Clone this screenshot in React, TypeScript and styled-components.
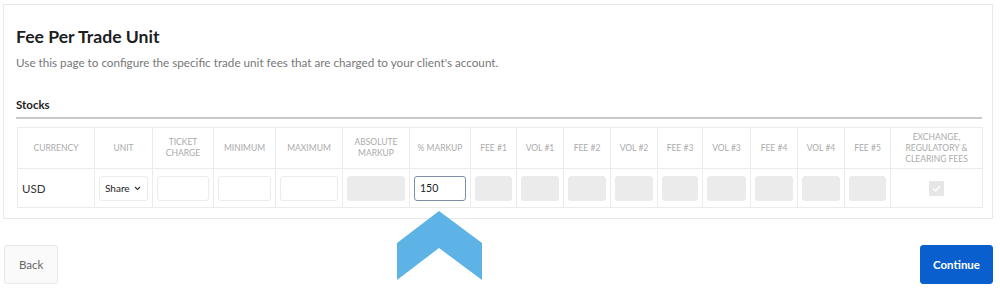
import React from "react";
import styled, { createGlobalStyle } from "styled-components";

const GlobalStyle = createGlobalStyle`
	body {
		margin: 0;
		background: #fff;
		font-family: "Lato", "Open Sans", Arial, sans-serif;
		color: #222;
	}
`;

const Page = styled.div`
	position: relative;
	width: 1000px;
	height: 289px;
	padding-top: 4px;
	box-sizing: border-box;
`;

const Card = styled.div`
	margin: 0 7px 0 3px;
	height: 215px;
	box-sizing: border-box;
	border: 1px solid #e8e8e8;
	padding: 22px 10px 0 12px;
`;

const Title = styled.h1`
	margin: 0;
	font-size: 17.6px;
	font-weight: 700;
	color: #1e1e1e;
	line-height: 20px;
`;

const Subtitle = styled.p`
	margin: 8px 0 0;
	font-size: 11.7px;
	color: #777;
	line-height: 14px;
`;

const SectionTitle = styled.h2`
	margin: 29px 0 0;
	font-size: 11.5px;
	font-weight: 700;
	color: #222;
	line-height: 14px;
	padding-bottom: 5px;
	border-bottom: 2px solid #c9c9c9;
`;

const Table = styled.table`
	margin: 8px 0 0 1px;
	width: 965px;
	border-collapse: collapse;
	table-layout: fixed;
`;

const HeadCell = styled.th`
	height: 40px;
	border: 1px solid #ebebeb;
	padding: 0 3px;
	font-size: 8.5px;
	font-weight: 400;
	line-height: 11px;
	color: #ababab;
	text-transform: uppercase;
	text-align: center;
	vertical-align: middle;
`;

const BodyCell = styled.td<{ $left?: boolean }>`
	height: 38px;
	border: 1px solid #ebebeb;
	padding: 0 4px;
	font-size: 11.5px;
	color: #333;
	text-align: ${(p) => (p.$left ? "left" : "center")};
	vertical-align: middle;
`;

const Field = styled.div<{ $disabled?: boolean; $active?: boolean }>`
	height: 25px;
	box-sizing: border-box;
	border-radius: 3px;
	border: 1px solid ${(p) => (p.$active ? "#7e8fa3" : p.$disabled ? "#ebebeb" : "#ececec")};
	background: ${(p) => (p.$disabled ? "#ebebeb" : "#fff")};
	font-size: 10.5px;
	color: #222;
	display: flex;
	align-items: center;
	padding-left: 5px;
	text-align: left;
`;

const Select = styled(Field)`
	justify-content: space-between;
	padding: 0 6px 0 5px;
	font-size: 10px;
`;

const Check = styled.span`
	display: inline-flex;
	align-items: center;
	justify-content: center;
	width: 15px;
	height: 15px;
	background: #e6e6e6;
	border-radius: 1px;
`;

const Footer = styled.div`
	display: flex;
	justify-content: space-between;
	padding: 26px 7px 0 4px;
`;

const Button = styled.button<{ $primary?: boolean }>`
	height: 39px;
	padding: 0 ${(p) => (p.$primary ? 12 : 14)}px;
	border-radius: 3px;
	font-family: inherit;
	font-size: 11.5px;
	font-weight: ${(p) => (p.$primary ? 700 : 400)};
	border: 1px solid ${(p) => (p.$primary ? "#0a5fcf" : "#e8e8e8")};
	background: ${(p) => (p.$primary ? "#0a5fcf" : "#fafafa")};
	color: ${(p) => (p.$primary ? "#fff" : "#666")};
`;

const Pointer = styled.svg`
	position: absolute;
	left: 397px;
	top: 211px;
`;

const columns: [string, number][] = [
	["Currency", 77],
	["Unit", 58],
	["Ticket Charge", 61],
	["Minimum", 62],
	["Maximum", 67],
	["Absolute Markup", 67],
	["% Markup", 61],
	["Fee #1", 46],
	["Vol #1", 47],
	["Fee #2", 47],
	["Vol #2", 47],
	["Fee #3", 45],
	["Vol #3", 48],
	["Fee #4", 47],
	["Vol #4", 47],
	["Fee #5", 46],
	["Exchange, Regulatory & Clearing Fees", 92],
];

const App = () => {
	return (
		<>
			<GlobalStyle />
			<Page>
				<Card>
					<Title>Fee Per Trade Unit</Title>
					<Subtitle>Use this page to configure the specific trade unit fees that are charged to your client's account.</Subtitle>
					<SectionTitle>Stocks</SectionTitle>
					<Table>
						<colgroup>
							{columns.map(([name, w]) => (
								<col key={name} style={{ width: w }} />
							))}
						</colgroup>
						<thead>
							<tr>
								{columns.map(([name]) => (
									<HeadCell key={name}>{name}</HeadCell>
								))}
							</tr>
						</thead>
						<tbody>
							<tr>
								<BodyCell $left>USD</BodyCell>
								<BodyCell>
									<Select>
										Share
										<svg width="7" height="5" viewBox="0 0 7 5">
											<path d="M1 1 L3.5 3.5 L6 1" fill="none" stroke="#333" strokeWidth="1.1" />
										</svg>
									</Select>
								</BodyCell>
								<BodyCell><Field /></BodyCell>
								<BodyCell><Field /></BodyCell>
								<BodyCell><Field /></BodyCell>
								<BodyCell><Field $disabled /></BodyCell>
								<BodyCell><Field $active>150</Field></BodyCell>
								{columns.slice(7, 16).map(([name]) => (
									<BodyCell key={name}><Field $disabled /></BodyCell>
								))}
								<BodyCell>
									<Check>
										<svg width="9" height="7" viewBox="0 0 9 7">
											<path d="M1 3.5 L3.5 6 L8 1" fill="none" stroke="#fff" strokeWidth="1.4" />
										</svg>
									</Check>
								</BodyCell>
							</tr>
						</tbody>
					</Table>
				</Card>
				<Footer>
					<Button>Back</Button>
					<Button $primary>Continue</Button>
				</Footer>
				<Pointer width="85" height="69" viewBox="0 0 85 69">
					<polygon points="42,0 85,32 85,69 42,37 0,69 0,32" fill="#5db3e6" />
				</Pointer>
			</Page>
		</>
	);
};

export default App;
